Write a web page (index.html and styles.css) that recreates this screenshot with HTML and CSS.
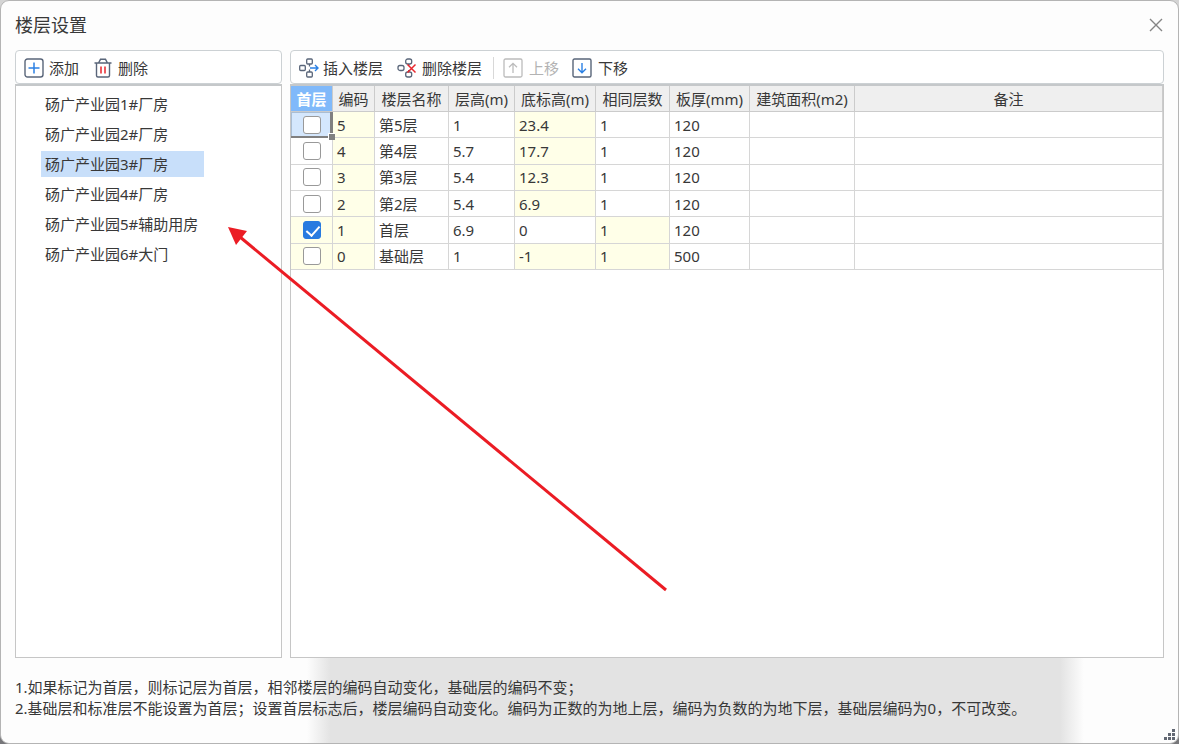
FILE: index.html
```html
<!DOCTYPE html>
<html lang="zh-CN">
<head>
<meta charset="utf-8">
<title>楼层设置</title>
<link rel="stylesheet" href="styles.css">
</head>
<body>
<main class="dialog">
  <header class="titlebar">
    <h1 class="title">楼层设置</h1>
    <button class="close" aria-label="关闭">
      <svg width="14" height="14" viewBox="0 0 14 14"><path d="M1 1 13 13M13 1 1 13" fill="none" stroke="#858585" stroke-width="1.4"/></svg>
    </button>
  </header>

  <div class="content">
    <section class="side">
      <div class="toolbar">
        <button class="tool tool-add">
          <svg width="20" height="20" viewBox="0 0 20 20" fill="none"><rect x="1" y="1" width="18" height="18" rx="2.5" stroke="#596579" stroke-width="1.4"/><path d="M10 4.5v11M4.5 10h11" stroke="#2b80e4" stroke-width="1.5"/></svg>
          <span>添加</span>
        </button>
        <button class="tool">
          <svg width="18" height="20" viewBox="0 0 18 20" fill="none"><path d="M.5 5h17M2.5 5v12.5q0 1.5 1.5 1.5h10q1.5 0 1.5-1.5V5M4.500 5 6.500 1.300h5L13.500 5" stroke="#596579" stroke-width="1.4"/><path d="M7 8.500v7M11 8.500v7" stroke="#e8262d" stroke-width="1.5"/></svg>
          <span>删除</span>
        </button>
      </div>
      <div class="panel">
        <ul class="buildings">
          <li class="building">砀广产业园1#厂房</li>
          <li class="building">砀广产业园2#厂房</li>
          <li class="building selected">砀广产业园3#厂房</li>
          <li class="building">砀广产业园4#厂房</li>
          <li class="building">砀广产业园5#辅助用房</li>
          <li class="building">砀广产业园6#大门</li>
        </ul>
      </div>
    </section>

    <section class="floors">
      <div class="toolbar">
        <button class="tool tool-insert">
          <svg width="20" height="20" viewBox="0 0 20 20" fill="none"><g stroke="#596579" stroke-width="1.3"><rect x="7.700" y="1" width="5.600" height="5" rx="1"/><rect x=".7" y="7.500" width="5.600" height="5" rx="1"/><rect x="7.700" y="14" width="5.600" height="5" rx="1"/><path d="M10.500 6v2.500M10.500 11.500v2.500"/></g><path d="M11 10h8M16 7l3 3-3 3" stroke="#2b80e4" stroke-width="1.4"/></svg>
          <span>插入楼层</span>
        </button>
        <button class="tool tool-remove">
          <svg width="20" height="20" viewBox="0 0 20 20" fill="none"><g stroke="#596579" stroke-width="1.3"><rect x="8.700" y="1" width="6" height="5" rx="2"/><rect x="1" y="7.500" width="6" height="5" rx="2"/><rect x="8.700" y="14" width="6" height="5" rx="2"/><path d="M11.700 6v2M11.700 12v2"/></g><path d="M10.500 6.500l8 8M18.500 6.500l-8 8" stroke="#e8262d" stroke-width="1.5"/></svg>
          <span>删除楼层</span>
        </button>
        <span class="divider"></span>
        <button class="tool tool-up" disabled>
          <svg width="20" height="20" viewBox="0 0 20 20" fill="none" stroke="#bcbcbc" stroke-width="1.3"><rect x="1" y="1" width="18" height="18" rx="1.500"/><path d="M10 15V5.500M6 9.300l4-4 4 4"/></svg>
          <span>上移</span>
        </button>
        <button class="tool">
          <svg width="20" height="20" viewBox="0 0 20 20" fill="none"><rect x="1" y="1" width="18" height="18" rx="1.500" stroke="#596579" stroke-width="1.4"/><path d="M10 5v9.500M6 10.700l4 4 4-4" stroke="#2b80e4" stroke-width="1.4"/></svg>
          <span>下移</span>
        </button>
      </div>
      <div class="panel">
        <table class="grid">
          <colgroup><col class="c-first"><col class="c-code"><col class="c-name"><col class="c-height"><col class="c-base"><col class="c-same"><col class="c-slab"><col class="c-area"><col></colgroup>
          <thead>
            <tr><th class="active">首层</th><th>编码</th><th>楼层名称</th><th>层高(m)</th><th>底标高(m)</th><th>相同层数</th><th>板厚(mm)</th><th>建筑面积(m2)</th><th>备注</th></tr>
          </thead>
          <tbody>
            <tr><td class="pick current"><input type="checkbox" class="check" aria-label="第5层设为首层"></td><td class="tint">5</td><td>第5层</td><td>1</td><td class="tint">23.4</td><td>1</td><td>120</td><td></td><td></td></tr>
            <tr><td class="pick"><input type="checkbox" class="check" aria-label="第4层设为首层"></td><td class="tint">4</td><td>第4层</td><td>5.7</td><td class="tint">17.7</td><td>1</td><td>120</td><td></td><td></td></tr>
            <tr><td class="pick"><input type="checkbox" class="check" aria-label="第3层设为首层"></td><td class="tint">3</td><td>第3层</td><td>5.4</td><td class="tint">12.3</td><td>1</td><td>120</td><td></td><td></td></tr>
            <tr><td class="pick"><input type="checkbox" class="check" aria-label="第2层设为首层"></td><td class="tint">2</td><td>第2层</td><td>5.4</td><td class="tint">6.9</td><td>1</td><td>120</td><td></td><td></td></tr>
            <tr><td class="pick tint"><input type="checkbox" class="check" aria-label="首层设为首层" checked></td><td class="tint">1</td><td>首层</td><td>6.9</td><td>0</td><td class="tint">1</td><td>120</td><td></td><td></td></tr>
            <tr><td class="pick tint"><input type="checkbox" class="check" aria-label="基础层设为首层"></td><td class="tint">0</td><td>基础层</td><td>1</td><td class="tint">-1</td><td class="tint">1</td><td>500</td><td></td><td></td></tr>
          </tbody>
        </table>
      </div>
    </section>
  </div>

  <footer class="notes">
    <p>1.如果标记为首层，则标记层为首层，相邻楼层的编码自动变化，基础层的编码不变；</p>
    <p>2.基础层和标准层不能设置为首层；设置首层标志后，楼层编码自动变化。编码为正数的为地上层，编码为负数的为地下层，基础层编码为0，不可改变。</p>
  </footer>

  <svg class="grip" width="11" height="11" viewBox="0 0 11 11" fill="#626873"><path d="M8 0h3v3H8zM4 4h3v3H4zM8 4h3v3H8zM0 8h3v3H0zM4 8h3v3H4zM8 8h3v3H8z"/></svg>
</main>

<svg class="arrow" width="440" height="365" viewBox="0 0 440 365"><path d="M12 10 438 363" stroke="#eb1c24" stroke-width="3" fill="none"/><path d="M0 0 19 4 8 18z" fill="#eb1c24"/></svg>
</body>
</html>
```

FILE: styles.css
```css
* {
  box-sizing: border-box;
}

body {
  margin: 0;
  min-height: 100vh;
  display: flex;
  background: linear-gradient(#d4d4d4 50%, #77777a);
  color: #383838;
  font: 15px/20px "Noto Sans", "Noto Sans CJK SC", sans-serif;
}

.dialog {
  position: relative;
  flex: 1;
  min-width: 0;
  display: flex;
  flex-direction: column;
  padding: 0 14px;
  border: 1px solid #b4b4b4;
  border-radius: 9px;
  background: #fdfdfd;
}

.titlebar {
  display: flex;
  align-items: center;
  justify-content: space-between;
  height: 49px;
  padding-bottom: 2px;
}

.title {
  margin: 0;
  font-size: 18px;
  font-weight: 400;
  line-height: 24px;
}

.close {
  display: flex;
  padding: 1px;
  border: 0;
  background: none;
}

.content {
  flex: 1;
  display: flex;
  gap: 8px;
}

.side,
.floors {
  display: flex;
  flex-direction: column;
}

.side {
  width: 267px;
}

.floors {
  flex: 1;
  min-width: 0;
}

.toolbar {
  display: flex;
  align-items: center;
  height: 34px;
  padding: 2px 8px 0;
  border: 1px solid #ccd1d4;
  border-radius: 4px;
  background: #fff;
}

.tool {
  display: flex;
  align-items: center;
  gap: 6px;
  padding: 0;
  border: 0;
  background: none;
  color: #383838;
  font: inherit;
}

.tool svg {
  flex: none;
}

.tool-add {
  gap: 5px;
  margin-right: 15px;
}

.tool-insert {
  gap: 4px;
  margin-right: 14px;
}

.tool-remove {
  gap: 5px;
}

.tool-up {
  margin-right: 13px;
}

.tool:disabled {
  color: #b3b3b3;
}

.divider {
  width: 1px;
  height: 22px;
  margin: 0 9px 0 11px;
  background: #d8d8d8;
}

.panel {
  flex: 1;
  border: 1px solid #c6c6c6;
  border-top: 2px solid #c5c8ca;
  background: #fff;
}

.buildings {
  width: 163px;
  margin: 5px 0 0 25px;
  padding: 0;
  list-style: none;
}

.building {
  margin-bottom: 4px;
  padding: 3px 4px;
  white-space: nowrap;
}

.building.selected {
  background: #c8dffa;
}

.grid {
  width: 100%;
  height: 184px;
  table-layout: fixed;
  border-collapse: separate;
  border-spacing: 0;
}

.c-first,
.c-code {
  width: 42px;
}

.c-name,
.c-same {
  width: 74px;
}

.c-height {
  width: 66px;
}

.c-base {
  width: 81px;
}

.c-slab {
  width: 80px;
}

.c-area {
  width: 105px;
}

.grid th,
.grid td {
  padding: 0 4px;
  border: 0 solid #d6d6d6;
  border-width: 0 1px 1px 0;
  white-space: nowrap;
}

.grid th {
  height: 26px;
  padding: 0;
  border-color: #cbcbcb;
  background: #efefef;
  font-weight: 400;
  text-align: center;
}

.grid th.active {
  background: #80b9fa;
  color: #fff;
  font-weight: 700;
}

.grid .tint {
  background: #ffffe8;
}

.grid .pick {
  padding: 0;
  text-align: center;
}

.grid .current {
  position: relative;
  border-color: #808080;
  background: #d4e7fd;
  box-shadow: inset -2px -1px #808080, inset 1px 1px #a9bdd3;
}

.current::after {
  content: "";
  position: absolute;
  right: -3px;
  bottom: -3px;
  width: 6px;
  height: 6px;
  border: 1px solid #fff;
  border-width: 1px 0 0 1px;
  background: #808080;
}

.check {
  position: relative;
  display: block;
  width: 18px;
  height: 18px;
  margin: 0 auto;
  appearance: none;
  border: 1px solid #999;
  border-radius: 3px;
  background: #fff;
}

.check:checked {
  border-color: #287be0;
  background: #287be0;
}

.check:checked::after {
  content: "";
  position: absolute;
  left: 5px;
  top: 1px;
  width: 6px;
  height: 11px;
  border: solid #fff;
  border-width: 0 2px 2px 0;
  transform: rotate(42deg);
}

.notes {
  margin: 0 -14px;
  padding: 19px 14px 24px;
  border-radius: 0 0 8px 8px;
  background: linear-gradient(90deg, transparent 26%, #e3e3e3 28%, #e3e3e3 90%, transparent 92%);
  line-height: 21px;
}

.notes p {
  margin: 0;
}

.grip {
  position: absolute;
  right: 3px;
  bottom: 3px;
}

.arrow {
  position: absolute;
  left: 228px;
  top: 227px;
  pointer-events: none;
}
```
